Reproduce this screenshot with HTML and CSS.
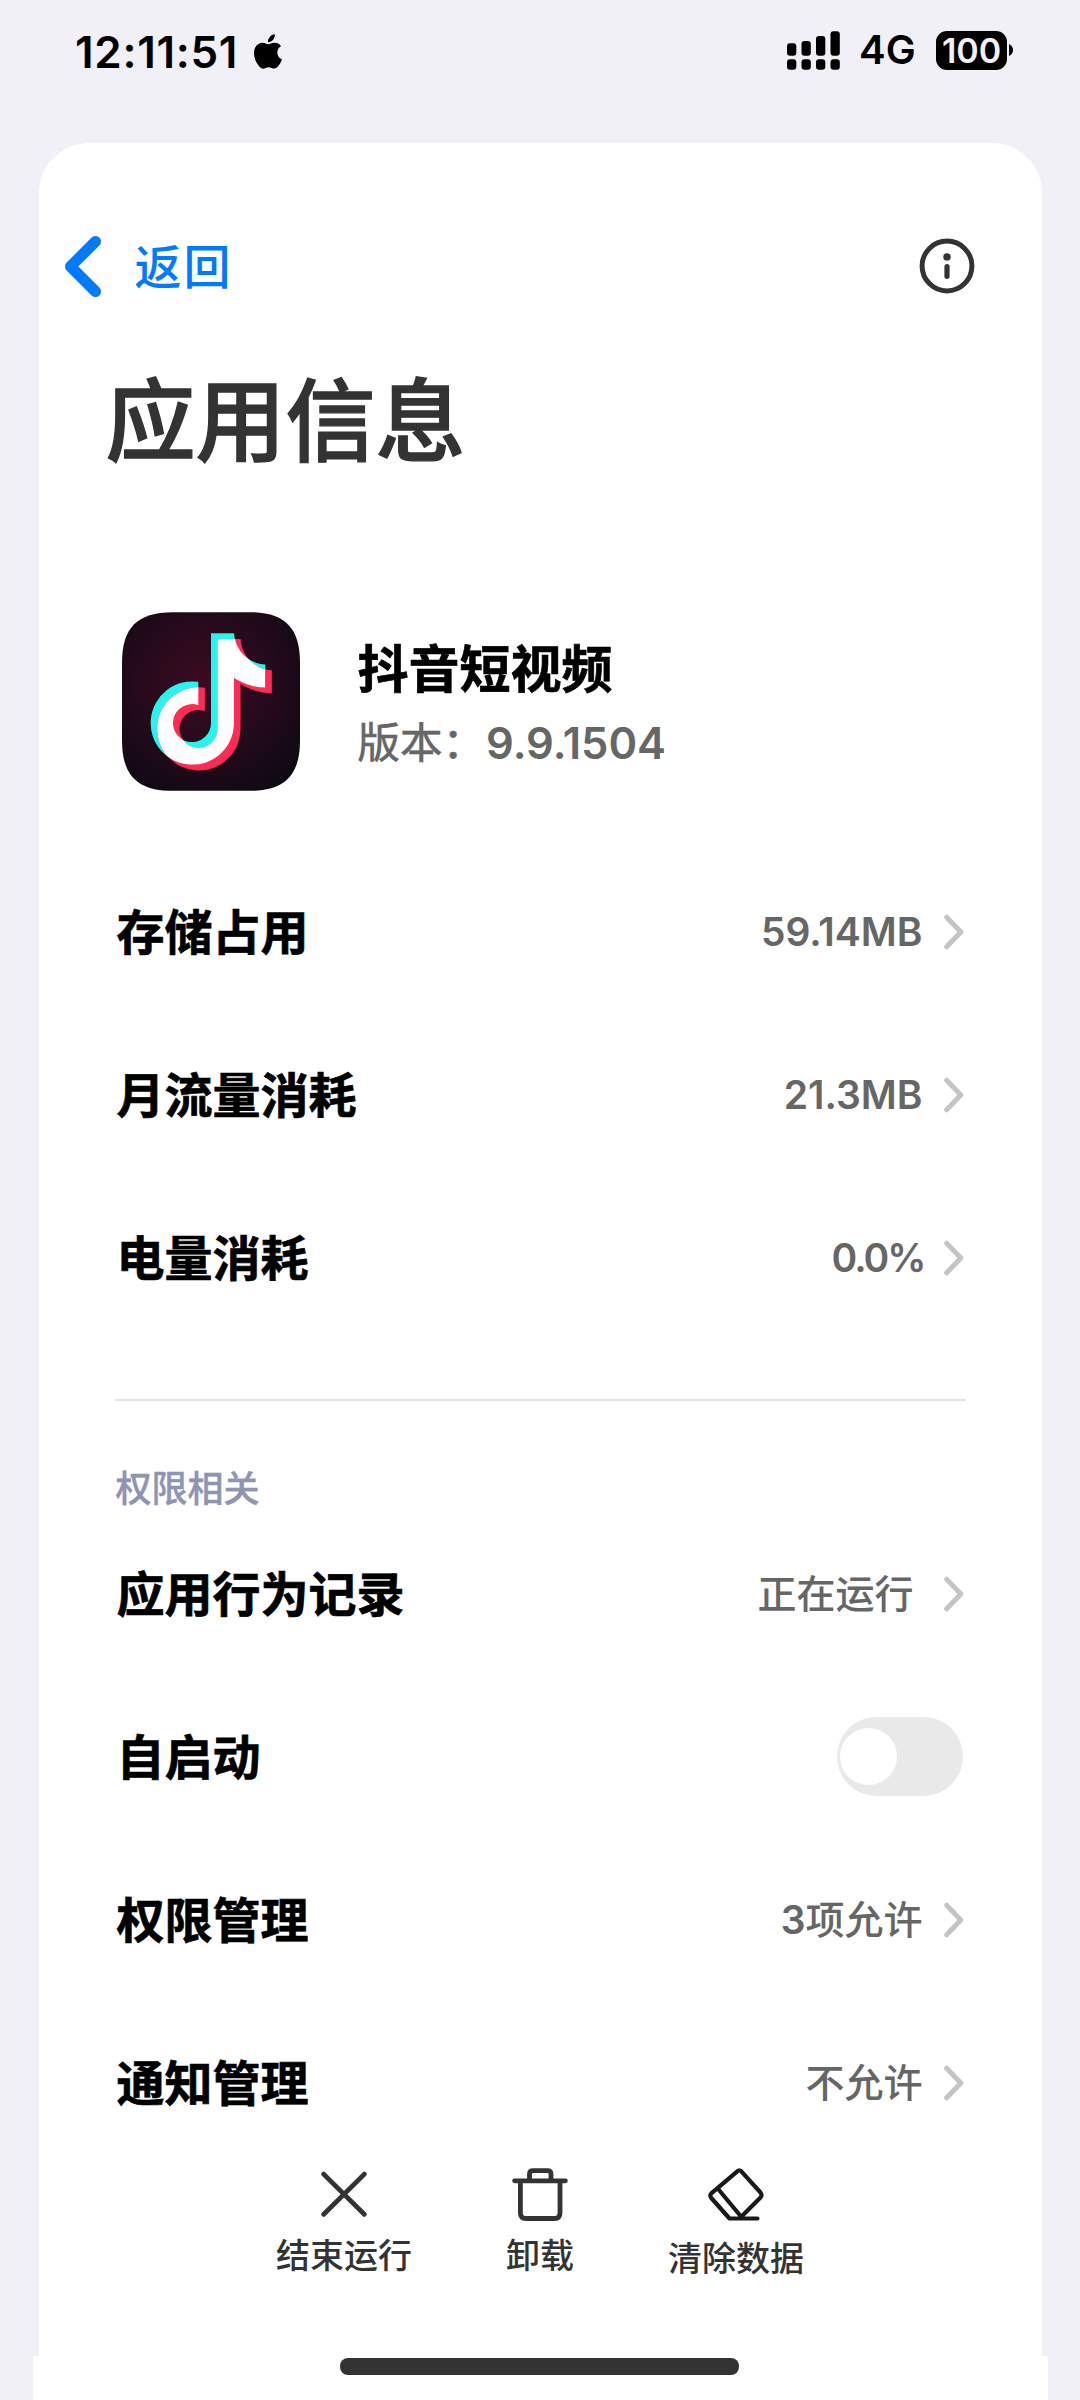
FILE: index.html
```html
<!DOCTYPE html>
<html lang="zh-CN">
<head>
<meta charset="utf-8">
<title>应用信息</title>
<link rel="stylesheet" href="styles.css">
</head>
<body>
<svg class="defs" width="0" height="0">
  <symbol id="chevron" viewBox="0 0 20 36"><path d="M2.700 3.200L16.800 18L2.700 32.800" fill="none" stroke="#c4c4c6" stroke-width="5" stroke-linecap="round" stroke-linejoin="round"/></symbol>
</svg>

<header class="status">
  <div class="status-left">
    <span class="time">12:11:51</span>
    <svg class="apple" viewBox="2.2 0 19.6 24"><path d="M12.152 6.896c-.948 0-2.415-1.078-3.96-1.04-2.04.027-3.91 1.183-4.961 3.014-2.117 3.675-.546 9.103 1.519 12.09 1.013 1.454 2.208 3.09 3.792 3.039 1.52-.065 2.09-.987 3.935-.987 1.831 0 2.35.987 3.96.948 1.637-.026 2.676-1.48 3.676-2.948 1.156-1.688 1.636-3.325 1.662-3.415-.039-.013-3.182-1.221-3.22-4.857-.026-3.04 2.48-4.494 2.597-4.559-1.429-2.09-3.623-2.324-4.39-2.376-2-.156-3.675 1.09-4.61 1.09zM15.53 3.83c.843-1.012 1.4-2.427 1.245-3.83-1.207.052-2.662.805-3.532 1.818-.78.896-1.454 2.338-1.273 3.714 1.338.104 2.715-.688 3.559-1.701"/></svg>
  </div>
  <div class="status-right">
    <svg class="signal" viewBox="0 0 53 39">
      <rect x="0" y="12.3" width="9.3" height="12.4" rx="3"/><rect x="14.5" y="10" width="9.3" height="14.7" rx="3"/><rect x="29" y="5" width="9.3" height="19.7" rx="3"/><rect x="43.5" y="0.3" width="9.3" height="24.4" rx="3"/>
      <rect x="0" y="28.2" width="9.3" height="10.6" rx="3"/><rect x="14.5" y="28.2" width="9.3" height="10.6" rx="3"/><rect x="29" y="28.2" width="9.3" height="10.6" rx="3"/><rect x="43.5" y="28.2" width="9.3" height="10.6" rx="3"/>
    </svg>
    <span class="network">4G</span>
    <span class="battery">100</span>
    <svg class="nub" viewBox="0 0 4 12"><path d="M0 0Q4 2 4 6Q4 10 0 12Z"/></svg>
  </div>
</header>

<main class="card">
  <nav class="nav">
    <a class="back">
      <svg class="back-icon" viewBox="0 0 36 61"><path d="M30.5 5.5L5.5 30.5L30.5 55.5" fill="none" stroke="#007aff" stroke-width="11" stroke-linecap="round" stroke-linejoin="round"/></svg>
      <span class="back-text">返回</span>
    </a>
    <svg class="info" viewBox="0 0 56 56"><circle cx="28" cy="28" r="24.9" fill="none" stroke="#333" stroke-width="5"/><circle cx="28" cy="18.9" r="3.7" fill="#333"/><path d="M28 28.5V38.3" stroke="#333" stroke-width="5.2" stroke-linecap="round"/></svg>
  </nav>

  <h1 class="title">应用信息</h1>

  <section class="app">
    <svg class="app-icon" viewBox="66 67 534 536">
      <defs>
        <radialGradient id="glow" cx="0.46" cy="0.4" r="0.72"><stop offset="0" stop-color="#3c0a20"/><stop offset="0.55" stop-color="#240a1b"/><stop offset="1" stop-color="#0c0913"/></radialGradient>
        <path id="note" d="M333 130H402C405 180 445 222 496 224V293C460 293 425 280 402 264V400A125 125 0 1 1 295 276V346A57 57 0 1 0 333 400Z"/>
        <clipPath id="note-clip"><use href="#note"/></clipPath>
      </defs>
      <path d="M66 219C66 113 112 67 218 67H448C554 67 600 113 600 219V451C600 557 554 603 448 603H218C112 603 66 557 66 451Z" fill="url(#glow)"/>
      <use href="#note" fill="#27f4ee"/>
      <use href="#note" x="19.5" y="17.5" fill="#fe2c55"/>
      <g clip-path="url(#note-clip)"><use href="#note" x="19.5" y="17.5" fill="#fff"/></g>
    </svg>
    <div class="app-meta">
      <div class="app-name">抖音短视频</div>
      <div class="app-version"><span class="version-label">版本：</span><span class="version-number">9.9.1504</span></div>
    </div>
  </section>

  <section class="list usage">
    <div class="row"><span class="label">存储占用</span><span class="value">59.14MB</span><svg class="chevron"><use href="#chevron"/></svg></div>
    <div class="row"><span class="label">月流量消耗</span><span class="value">21.3MB</span><svg class="chevron"><use href="#chevron"/></svg></div>
    <div class="row"><span class="label">电量消耗</span><span class="value percent">0.0%</span><svg class="chevron"><use href="#chevron"/></svg></div>
  </section>

  <h2 class="group-title">权限相关</h2>

  <section class="list">
    <div class="row"><span class="label">应用行为记录</span><span class="value cjk running">正在运行</span><svg class="chevron"><use href="#chevron"/></svg></div>
    <div class="row"><span class="label">自启动</span><span class="toggle"><span class="knob"></span></span></div>
    <div class="row"><span class="label">权限管理</span><span class="value cjk"><b class="count">3</b>项允许</span><svg class="chevron"><use href="#chevron"/></svg></div>
    <div class="row"><span class="label">通知管理</span><span class="value cjk">不允许</span><svg class="chevron"><use href="#chevron"/></svg></div>
  </section>

  <div class="actions">
    <div class="action">
      <svg class="action-icon" viewBox="0 0 56 54"><path d="M7.5 7L48.500 47.500M48.500 7L7.500 47.500" fill="none" stroke="#333" stroke-width="4.600" stroke-linecap="round"/></svg>
      <span>结束运行</span>
    </div>
    <div class="action">
      <svg class="action-icon" viewBox="0 0 56 54"><g fill="none" stroke="#333" stroke-width="4.800" stroke-linecap="round" stroke-linejoin="round"><path d="M2.600 13.800H53.400M17.500 13.500V7Q17.500 3.600 21 3.600H35.500Q39 3.600 39 7V13.500M8.400 14V46Q8.400 51.500 14 51.500H42.500Q48 51.500 48 46V14"/></g></svg>
      <span>卸载</span>
    </div>
    <div class="action clear">
      <svg class="action-icon" viewBox="0 0 56 54"><path d="M29.300 4.300Q31.300 2.300 33.300 4.300L52.500 25.500Q54.500 28 52.500 30.500L31.500 51.500H21.500L3.300 31Q1.300 28.500 3.300 26.300ZM9.700 21.500L33 49.500M21.500 51.500H49.500" fill="none" stroke="#191919" stroke-width="4.200" stroke-linecap="round" stroke-linejoin="round"/></svg>
      <span>清除数据</span>
    </div>
  </div>
</main>

<footer class="home"><div class="home-bar"></div></footer>
</body>
</html>
```
FILE: styles.css
```css
* { box-sizing: border-box; }

body {
  margin: 0;
  width: 1080px;
  height: 2400px;
  overflow: hidden;
  display: flex;
  flex-direction: column;
  align-items: center;
  background: #f1f0f6;
  color: #000;
  font-family: Inter, "Noto Sans CJK SC", sans-serif;
}

svg { display: block; flex: none; }
.defs { display: none; }

/* Status bar */
.status {
  width: 100%;
  height: 143px;
  padding: 20px 67px 0 75px;
  display: flex;
  justify-content: space-between;
  align-items: flex-start;
}
.status-left, .status-right { display: flex; align-items: center; height: 60px; }
.status-left { height: 64px; gap: 16px; }
.time { font-size: 44px; font-weight: 600; letter-spacing: 0.7px; white-space: nowrap; }
.apple { width: 28px; height: 35px; margin-top: -1px; }
.signal { width: 53px; height: 39px; }
.network { margin-left: 19px; font-size: 40px; font-weight: 600; width: 57px; line-height: 60px; }
.battery {
  margin-left: 20px;
  width: 71px;
  height: 39px;
  border-radius: 11px;
  background: #000;
  color: #f1f0f6;
  font-size: 34px;
  font-weight: 600;
  line-height: 39px;
  text-align: center;
}
.nub { width: 4px; height: 12px; margin-left: 2px; }

/* Card */
.card {
  width: 1003px;
  height: 2213px;
  flex: none;
  border-radius: 50px 50px 0 0;
  background: #fff;
}

.nav {
  height: 163px;
  padding: 83px 67px 0 26px;
  display: flex;
  justify-content: space-between;
  align-items: center;
}
.back { display: flex; align-items: center; gap: 34px; }
.back-icon { width: 36px; height: 61px; }
.back-text { padding-top: 2px; font-size: 47px; font-weight: 500; line-height: 60px; letter-spacing: 2px; color: #007aff; }
.info { width: 56px; height: 56px; }

.title {
  margin: 71px 0 0 67px;
  font-size: 90px;
  line-height: 90px;
  font-weight: 500;
  color: #333;
  -webkit-text-stroke: 1.3px #333;
}

.app { display: flex; margin: 145px 0 0 83px; height: 180px; gap: 58px; }
.app-icon { width: 178px; height: 179px; }
.app-meta { padding-top: 26px; }
.app-name { font-size: 51px; line-height: 64px; font-weight: 700; -webkit-text-stroke: 0.7px #000; }
.app-version { display: flex; margin-top: 14px; line-height: 54px; color: #666; }
.version-label { font-size: 42.500px; -webkit-text-stroke: 0.6px #666; }
.version-number { font-size: 43.500px; font-weight: 600; margin-left: 1px; }

/* Lists */
.list { padding: 0 77px; }
.usage { margin: 58px 76px 0; padding: 0 1px; height: 551px; border-bottom: 2px solid #e3e3e4; }
.row { display: flex; align-items: center; height: 163px; }
.label { flex: 1; padding: 2px 0 0 1px; font-size: 48px; line-height: 60px; font-weight: 700; -webkit-text-stroke: 0.7px #000; }
.value { font-size: 39px; line-height: 50px; font-weight: 600; color: #666; }
.value.cjk { font-weight: 500; }
.value.percent { letter-spacing: -2px; margin-right: -2px; }
.value.running { margin-right: 9px; }
.count { font-weight: 600; }
.chevron { width: 20px; height: 36px; margin: 0 1px 0 21px; }

.group-title {
  margin: 64px 0 0 77px;
  height: 47px;
  font-size: 36px;
  line-height: 49px;
  font-weight: 500;
  color: #8f94b3;
  -webkit-text-stroke: 0.4px #8f94b3;
}

.toggle { width: 126px; height: 79px; margin: -1px 2px 0 0; padding: 11px 3px; border-radius: 40px; background: #e9e9ea; }
.knob { display: block; width: 57px; height: 57px; border-radius: 50%; background: #fff; }

/* Bottom actions */
.actions { display: flex; justify-content: center; padding-top: 3px; }
.action {
  width: 196px;
  display: flex;
  flex-direction: column;
  align-items: center;
  gap: 15px;
  font-size: 34px;
  line-height: 40px;
  font-weight: 500;
  color: #333;
}
.action-icon { width: 56px; height: 54px; }
.clear { gap: 18px; }

/* Home indicator */
.home { width: 1015px; height: 44px; flex: none; padding-top: 2px; background: #fff; }
.home-bar { width: 399px; height: 17px; margin: 0 0 0 307px; border-radius: 8px; background: #333; }
```
